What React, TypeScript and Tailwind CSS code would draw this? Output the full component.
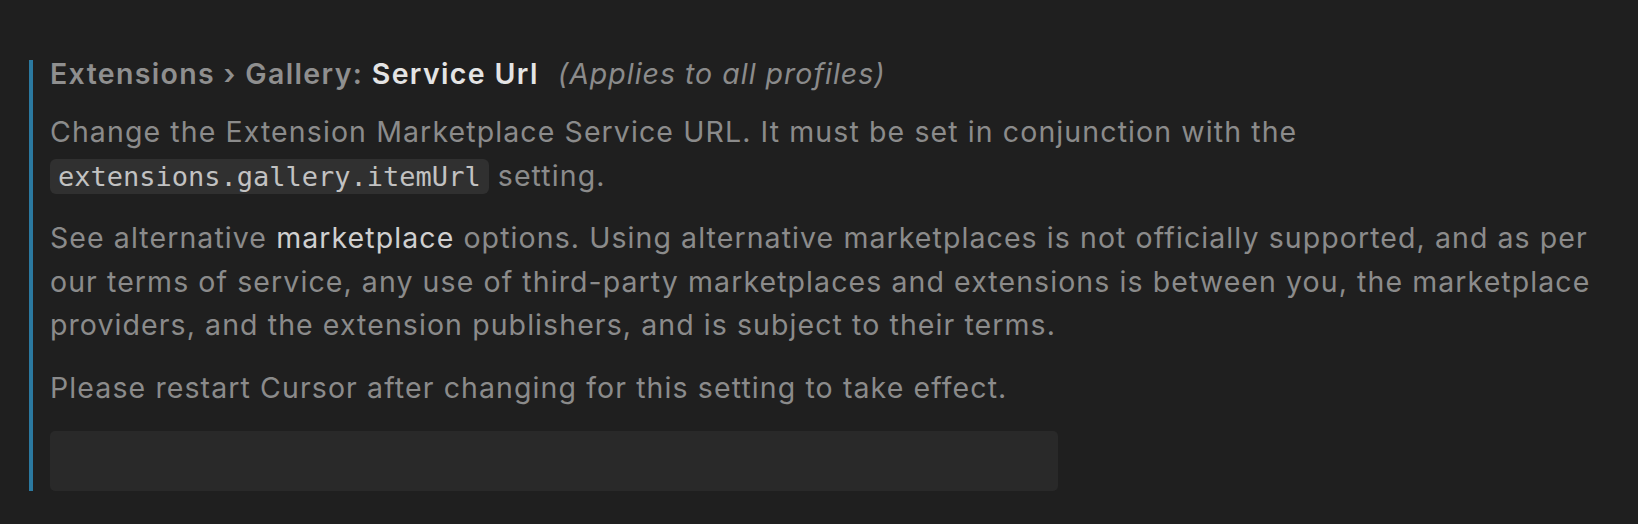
export default function App() {
  return (
    <main className="min-h-screen w-full bg-[#1f1f1f] pt-[60px] font-['Inter','Noto_Sans',sans-serif] text-[28.5px] text-[#8b8b8b]">
      <div className="ml-[29px] mr-[30px] border-l-4 border-[#2b79a0] pl-[17px]">
        <div className="leading-[28px]">
          <span className="font-semibold tracking-[1.35px] text-[#8f8f8f]">Extensions › Gallery: </span>
          <span className="font-semibold tracking-[1.35px] text-[#e4e4e4]">Service Url</span>
          <span className="ml-[10px] italic tracking-[1px]"> (Applies to all profiles)</span>
        </div>

        <p className="mt-[22px] leading-[43.5px] tracking-[1.1px]">
          Change the Extension Marketplace Service URL. It must be set in conjunction with the{' '}
          <code className="rounded-[6px] bg-[#303030] px-[8px] py-[2px] font-['DejaVu_Sans_Mono','Liberation_Mono',monospace] text-[27px] tracking-normal text-[#c2c2c2]">
            extensions.gallery.itemUrl
          </code>{' '}
          setting.
        </p>

        <p className="mt-[18px] leading-[43.5px] tracking-[1.08px]">
          See alternative <span className="text-[#d0d0d0]">marketplace</span> options. Using
          alternative marketplaces is not officially supported, and as per our terms of service, any
          use of third-party marketplaces and extensions is between you, the marketplace providers,
          and the extension publishers, and is subject to their terms.
        </p>

        <p className="mt-[19px] leading-[43.5px] tracking-[1.1px]">
          Please restart Cursor after changing for this setting to take effect.
        </p>

        <div className="mt-[22px] h-[60px] w-[1008px] rounded-[5px] bg-[#292929]" />
      </div>
    </main>
  )
}
